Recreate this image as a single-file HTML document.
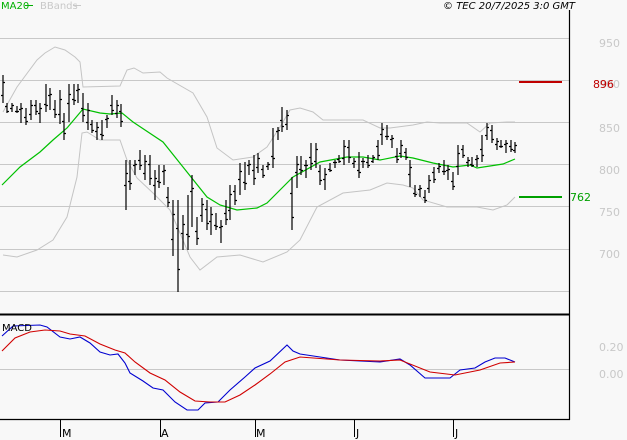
<!DOCTYPE html><html><head><style>
body{margin:0;background:#f8f8f8;}
svg{display:block;font-family:"DejaVu Sans","Liberation Sans",sans-serif;}
</style></head><body>
<svg width="627" height="440" viewBox="0 0 627 440" xmlns="http://www.w3.org/2000/svg">
<rect width="627" height="440" fill="#f8f8f8"/>
<g stroke="#c8c8c8" stroke-width="1">
<line x1="0" y1="38.5" x2="569" y2="38.5"/><line x1="0" y1="80.5" x2="569" y2="80.5"/>
<line x1="0" y1="122.5" x2="569" y2="122.5"/><line x1="0" y1="164.5" x2="569" y2="164.5"/>
<line x1="0" y1="206.5" x2="569" y2="206.5"/><line x1="0" y1="249.5" x2="569" y2="249.5"/>
<line x1="0" y1="291.5" x2="569" y2="291.5"/><line x1="0" y1="369.5" x2="569" y2="369.5"/>
</g>
<g fill="none" stroke="#c4c4c4" stroke-width="1">
<polyline points="3,112 17,87 37,60 45,53 55,47 65,50 75,57 80,62 83,87 120,86 127,70 134,68 143,73 160,72 167,78 193,93 207,117 217,148 233,160 253,157 267,147 280,127 290,110 300,108 313,112 323,120 337,120 363,120 380,128 390,128 413,125 427,122 440,123 467,123 480,132 490,123 507,122 515,122"/>
<polyline points="3,255 17,257 37,250 53,240 67,217 77,177 82,133 87,132 100,140 120,140 127,160 137,178 153,193 170,210 180,233 190,257 200,270 217,257 240,255 263,262 287,252 300,240 317,207 343,193 370,190 387,183 403,185 413,188 423,200 447,207 477,207 493,210 507,205 515,197"/>
</g>
<polyline fill="none" stroke="#00c000" stroke-width="1.2" points="2,185 20,167 40,152 53,140 67,128 83,109 100,113 110,114 122,113 133,122 163,142 183,167 207,197 220,205 237,210 257,208 267,203 283,187 293,177 320,162 347,157 363,157 380,160 400,156 413,158 433,163 453,167 470,165 477,168 490,166 503,164 515,159"/>
<g stroke="#000" stroke-width="1.2">
<path id="bars" d="M3,75V103M7,103V113M12,103V112M17,106V113M21,103V123M26,108V125M31,100V120M36,100V115M40,103V123M46,84V112M50,88V110M55,100V118M60,90V124M64,113V140M69,84V122M74,84V105M78,84V103M83,93V122M88,103V130M92,120V133M97,122V140M102,120V140M107,115V128M112,95V115M117,100V118M121,104V127M126,160V210M130,160V190M135,160V175M140,150V170M145,155V180M150,155V185M155,170V200M159,165V188M164,165V185M168,187V207M173,200V256M178,200V292M183,215V250M188,195V250M192,175V227M197,217V245M202,198V222M207,200V230M211,207V235M216,213V230M221,220V243M226,200V225M230,185V220M235,185V205M240,163V195M245,162V190M249,160V175M254,155V185M258,153V173M263,165V178M268,162V170M273,128V168M278,127V140M282,107V132M287,110V130M292,177V230M297,156V188M301,156V175M306,160V178M311,143V170M316,143V168M320,165V185M325,168V190M330,163V172M335,160V168M339,155V163M344,140V165M349,140V163M354,158V168M359,152V178M363,158V168M368,155V168M373,155V163M378,140V160M382,123V145M387,125V140M392,135V148M397,148V163M401,140V158M406,148V160M410,160V187M415,185V197M420,185V197M425,190V203M429,175V193M434,167V183M439,163V173M444,160V175M448,165V180M453,172V190M458,145V175M463,145V158M468,157V167M472,157V167M477,155V167M482,135V162M487,123V140M492,125V143M497,138V150M501,140V148M506,140V153M511,140V152M515,142V153"/>
<path id="ticks" d=""/>
</g>
<script>
(function(){var d=document.getElementById('bars').getAttribute('d');var re=/M([\d.]+),([\d.]+)V([\d.]+)/g,m,o='',i=0;
while((m=re.exec(d))){var x=+m[1],a=+m[2],b=+m[3];var t1=a+(b-a)*(i%3==0?0.7:i%3==1?0.3:0.5),t2=a+(b-a)*(i%2?0.75:0.25);
o+='M'+(x-2)+','+Math.round(t1)+'.5H'+x+'M'+x+','+Math.round(t2)+'.5H'+(x+2);i++;}
document.getElementById('ticks').setAttribute('d',o);})();
</script>
<rect x="519" y="81" width="43" height="2" fill="#c00000"/>
<rect x="519" y="196" width="43" height="2" fill="#00a000"/>
<line x1="569.5" y1="10" x2="569.5" y2="420" stroke="#000" stroke-width="1.2"/>
<rect x="0" y="313.5" width="570" height="2" fill="#000"/>
<line x1="0" y1="419.5" x2="570" y2="419.5" stroke="#000" stroke-width="1.2"/>
<g stroke="#000" stroke-width="1"><line x1="60.5" y1="420" x2="60.5" y2="437"/><line x1="160.5" y1="420" x2="160.5" y2="437"/><line x1="255.5" y1="420" x2="255.5" y2="437"/><line x1="354.5" y1="420" x2="354.5" y2="437"/><line x1="453.5" y1="420" x2="453.5" y2="437"/></g>
<g font-size="11" fill="#000"><text x="62" y="437">M</text><text x="161" y="437">A</text><text x="256" y="437">M</text><text x="356" y="437">J</text><text x="455" y="437">J</text></g>
<polyline fill="none" stroke="#0000d0" stroke-width="1.1" points="2,336 13,326 40,325 47,327 60,337 70,339 80,337 90,343 100,352 110,355 118,354 125,363 130,373 143,381 153,388 163,390 175,402 187,410 198,410 205,403 218,402 230,390 245,377 255,368 270,361 287,345 293,351 300,354 340,360 380,362 400,359 410,365 425,378 450,378 460,370 475,368 485,362 495,358 505,358 515,362"/>
<polyline fill="none" stroke="#d00000" stroke-width="1.1" points="2,351 15,338 30,332 45,330 60,331 70,334 85,336 100,344 115,350 125,353 135,362 150,373 165,380 180,392 195,401 210,402 225,402 240,395 255,385 270,374 285,362 300,357 340,360 380,361 400,360 430,372 455,375 480,370 500,363 515,362"/>
<text x="2" y="331" font-size="10" fill="#000">MACD</text>
<g font-size="11" fill="#c8c8c8"><text x="599" y="47">950</text><text x="599" y="88">900</text><text x="599" y="132">850</text><text x="599" y="174">800</text><text x="599" y="216">750</text><text x="599" y="258">700</text><text x="599" y="351">0.20</text><text x="599" y="378">0.00</text></g>
<text x="593" y="88" font-size="11" fill="#c00000">896</text>
<text x="570" y="201" font-size="11" fill="#00a000">762</text>
<text x="1" y="9" font-size="10" fill="#00b000">MA20</text><line x1="25" y1="5.5" x2="33" y2="5.5" stroke="#00b000"/>
<text x="40" y="9" font-size="10" fill="#c8c8c8">BBands</text><line x1="73" y1="5.5" x2="81" y2="5.5" stroke="#c8c8c8"/>
<text x="575" y="9" font-size="10" fill="#000" font-style="italic" text-anchor="end">© TEC 20/7/2025 3:0 GMT</text>
</svg>
</body></html>
